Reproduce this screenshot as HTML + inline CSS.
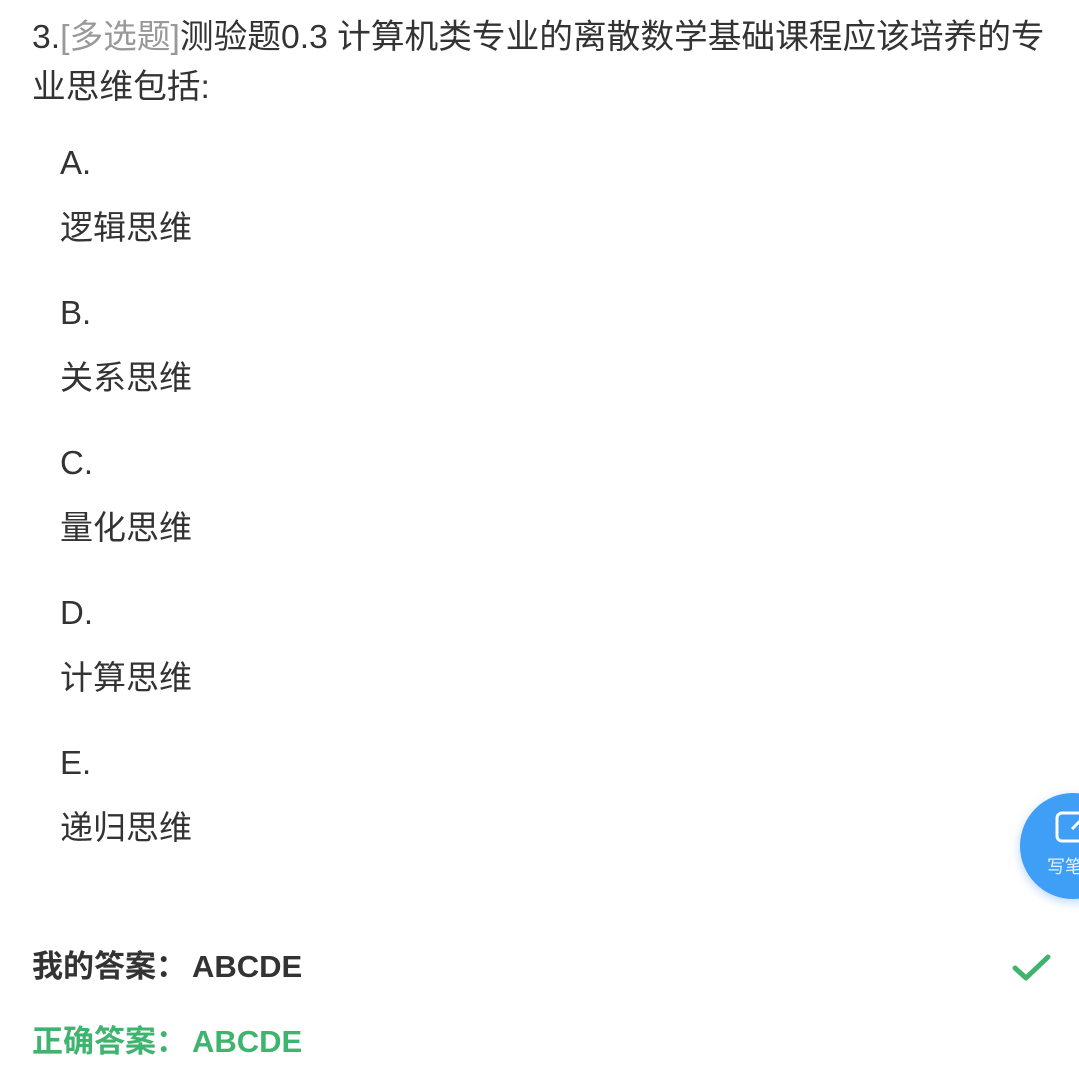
<!DOCTYPE html>
<html><head><meta charset="utf-8"><style>
html,body{margin:0;padding:0;background:#fff;width:1079px;height:1089px;overflow:hidden;position:relative;}
body{font-family:"Liberation Sans","Noto Sans CJK SC",sans-serif;color:#333;}
.t{position:absolute;white-space:nowrap;}
.q{left:32px;top:12px;font-size:33.7px;line-height:50px;color:#333;}
.g{color:#999;}
.l{left:60px;font-size:33px;line-height:40px;color:#333;}
.a{left:32px;font-size:31px;font-weight:bold;line-height:40px;}
.c{display:inline-block;margin-right:5px;}
.fab{position:absolute;left:1020px;top:793px;width:106px;height:106px;border-radius:50%;background:#3f9ef5;box-shadow:0 3px 10px rgba(60,140,230,.35);}
</style></head><body>
<div class="t q">3.<span class="g">[多选题]</span>测验题0.3 计算机类专业的离散数学基础课程应该培养的专<br>业思维包括:</div>
<div class="t l" style="top:143px">A.</div>
<div class="t l" style="top:208px">逻辑思维</div>
<div class="t l" style="top:293px">B.</div>
<div class="t l" style="top:358px">关系思维</div>
<div class="t l" style="top:443px">C.</div>
<div class="t l" style="top:508px">量化思维</div>
<div class="t l" style="top:593px">D.</div>
<div class="t l" style="top:658px">计算思维</div>
<div class="t l" style="top:743px">E.</div>
<div class="t l" style="top:808px">递归思维</div>
<div class="fab">
<svg width="106" height="106" style="position:absolute;left:0;top:0">
<rect x="37" y="20" width="40" height="28" rx="5" fill="none" stroke="#fff" stroke-width="3"/>
<path d="M52 36 L62 26" stroke="#fff" stroke-width="3" fill="none"/>
</svg>
<div style="position:absolute;left:27px;top:60px;font-size:18px;color:#e6f2ff;">写笔记</div>
</div>
<div class="t a" style="top:947px;color:#333">我的答案<span class="c">：</span>ABCDE</div>
<div class="t a" style="top:1022px;color:#3fb46e">正确答案<span class="c">：</span>ABCDE</div>
<svg style="position:absolute;left:1010px;top:950px" width="45" height="35"><path d="M5 18 L16 28 L38 7" stroke="#3fb46e" stroke-width="5" fill="none" stroke-linecap="round" stroke-linejoin="round"/></svg>
</body></html>
